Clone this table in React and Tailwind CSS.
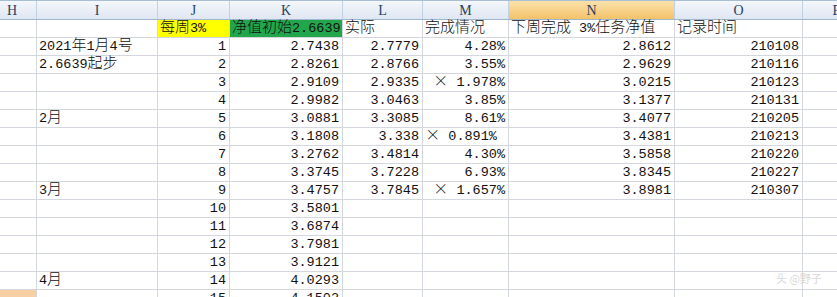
import React from 'react';

const cols = [
  { key: 'H', w: 'w-[37px]' },
  { key: 'I', w: 'w-[121px]' },
  { key: 'J', w: 'w-[72px]' },
  { key: 'K', w: 'w-[113px]' },
  { key: 'L', w: 'w-[80px]' },
  { key: 'M', w: 'w-[86px]' },
  { key: 'N', w: 'w-[166px]' },
  { key: 'O', w: 'w-[128px]' },
  { key: 'P', w: 'w-[68px]' },
];

// I, J, K, L, M, N, O
const rows = [
  ['2021年1月4号', '1', '2.7438', '2.7779', '4.28%', '2.8612', '210108'],
  ['2.6639起步', '2', '2.8261', '2.8766', '3.55%', '2.9629', '210116'],
  ['', '3', '2.9109', '2.9335', '× 1.978%', '3.0215', '210123'],
  ['', '4', '2.9982', '3.0463', '3.85%', '3.1377', '210131'],
  ['2月', '5', '3.0881', '3.3085', '8.61%', '3.4077', '210205'],
  ['', '6', '3.1808', '3.338', '× 0.891% ', '3.4381', '210213'],
  ['', '7', '3.2762', '3.4814', '4.30%', '3.5858', '210220'],
  ['', '8', '3.3745', '3.7228', '6.93%', '3.8345', '210227'],
  ['3月', '9', '3.4757', '3.7845', '× 1.657%', '3.8981', '210307'],
  ['', '10', '3.5801', '', '', '', ''],
  ['', '11', '3.6874', '', '', '', ''],
  ['', '12', '3.7981', '', '', '', ''],
  ['', '13', '3.9121', '', '', '', ''],
  ['4月', '14', '4.0293', '', '', '', ''],
  ['', '15', '4.1502', '', '', '', ''],
];

const cjk = /[\u4e00-\u9fff×]/;

function seg(s) {
  return s.split(/([\u4e00-\u9fff×]+)/).map((p, i) =>
    cjk.test(p)
      ? <span key={i} className="text-[15px] leading-[15px] font-['Noto_Sans_CJK_SC',sans-serif] font-light">{p}</span>
      : p
  );
}

function Cell({ w, children, right, bg = '' }) {
  return (
    <div className={`${w} shrink-0 h-[18px] border-r border-b border-[#d4d8de] overflow-visible whitespace-pre flex items-end ${right ? 'justify-end pr-[3px]' : 'pl-[2px]'} ${bg}`}>
      {children && <span className="leading-[17px]">{children}</span>}
    </div>
  );
}

export default function App() {
  const head = ['', '每周3%', '净值初始2.6639', '实际', '完成情况', '下周完成 3%任务净值', '记录时间', ''];
  return (
    <div className="relative w-[837px] h-[297px] overflow-hidden bg-white text-[13.5px] text-[#111] font-['Liberation_Mono','Noto_Sans_CJK_SC',monospace]">
      <div className="flex h-[20px] border-t border-[#a9bdd3] border-b border-b-[#9eb6ce]">
        {cols.map(c => (
          <div
            key={c.key}
            className={`${c.w} shrink-0 border-r border-[#c3d0e0] flex items-center font-['Liberation_Serif',serif] text-[14px] text-[#27415f] ${c.key === 'H' ? 'pl-[7px]' : 'justify-center'} ${c.key === 'N' ? 'bg-gradient-to-b from-[#fbe2a9] to-[#f3c269]' : 'bg-gradient-to-b from-[#f4f7fb] to-[#dfe7f2]'}`}
          >
            {c.key}
          </div>
        ))}
      </div>

      <div className="flex">
        <Cell w="w-[37px]" />
        <Cell w="w-[121px]" />
        {head.slice(1, 7).map((h, i) => (
          <Cell
            key={i}
            w={cols[i + 2].w}
            bg={i === 0 ? 'bg-[#ffff00]' : i === 1 ? 'bg-[#22a64c]' : ''}
          >
            {seg(h)}
          </Cell>
        ))}
        <Cell w="w-[68px]" />
      </div>

      {rows.map((r, ri) => (
        <div key={ri} className="flex">
          <Cell w="w-[37px]" bg={ri === 14 ? 'bg-[#f8cfa3]' : ''} />
          <Cell w="w-[121px]">{r[0] ? seg(r[0]) : null}</Cell>
          {r.slice(1).map((v, i) => (
            <Cell key={i} w={cols[i + 2].w} right>{v ? seg(v) : null}</Cell>
          ))}
          <Cell w="w-[68px]" />
        </div>
      ))}

      <div className="absolute left-[776px] top-[270px] text-[11px] text-[#d9d9d9] font-['Noto_Sans_CJK_SC',sans-serif]">
        头 @野子
      </div>
    </div>
  );
}
